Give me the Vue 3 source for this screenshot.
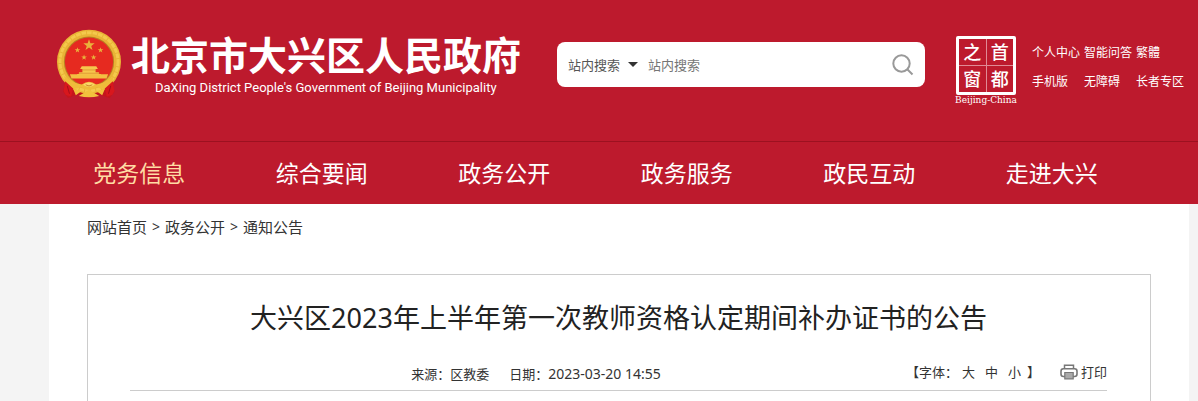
<template>
    <div class="page">
        <header class="header">
            <div class="header-top">
                <a class="logo" href="#">
                    <!-- National emblem -->
                    <svg class="emblem" viewBox="46 43 200 210" aria-hidden="true">
                        <path d="M76 190 L68 232 L82 251 L112 240 L145 250 L178 240 L208 252 L223 232 L214 190 Z" fill="#c4161c" />
                        <circle cx="146" cy="141" r="97" fill="#e9b436" />
                        <circle cx="146" cy="141" r="88" fill="none" stroke="#f4c94c" stroke-width="9" stroke-dasharray="14 3" />
                        <circle cx="146" cy="141" r="76" fill="#b98022" />
                        <circle cx="146" cy="141" r="73" fill="#e62a20" />
                        <polygon v-for="(star, i) in stars" :key="i" :points="star" fill="#e9b23c" />
                        <path d="M124 155 H168 L173 163 H119 Z M126 163 H166 V173 H126 Z M116 173 H176 V181 H116 Z M110 178 H182 V190 H110 Z" fill="#f6c64c" />
                        <path d="M88 179 H204 L199 192 H93 Z" fill="#f3bd42" />
                        <path d="M124 166 H168 M114 176 H178" stroke="#d8862a" stroke-width="2" />
                        <path d="M70 184 Q96 205 124 210 Q146 194 168 210 Q196 205 221 184 L213 215 Q188 230 171 218 Q146 234 121 218 Q102 230 79 215 Z" fill="#efbb3a" />
                        <path d="M128 211 Q146 197 164 211 Q146 223 128 211 Z" fill="#f9d96a" />
                        <path d="M136 211 Q146 218 156 211" stroke="#c98624" stroke-width="3" fill="none" />
                        <path d="M74 200 L98 222 L92 247 L75 241 L69 230 Z M218 200 L194 222 L200 247 L217 241 L223 230 Z" fill="#d8171d" />
                        <path d="M98 224 L124 230 L106 243 Z M194 224 L168 230 L186 243 Z M115 245 L146 226 L177 245 Q146 253 115 245 Z" fill="#f2c13d" />
                        <path d="M80 214 L87 238 M212 214 L205 238" stroke="#a70d18" stroke-width="3" />
                    </svg>
                    <span class="logo-text">
                        <strong class="logo-name">北京市大兴区人民政府</strong>
                        <span class="logo-en">DaXing District People's Government of Beijing Municipality</span>
                    </span>
                </a>

                <form class="search" role="search" @submit.prevent>
                    <div class="search-scope">
                        <select v-model="scope" aria-label="搜索范围">
                            <option>站内搜索</option>
                        </select>
                    </div>
                    <input v-model="keyword" type="text" placeholder="站内搜索" aria-label="站内搜索">
                    <button type="submit" aria-label="搜索">
                        <svg viewBox="0 0 22 22" width="22" height="22" fill="none" stroke="#999" stroke-width="2">
                            <circle cx="9.5" cy="9.5" r="8.2" />
                            <path d="M15.5 15.5 L20.5 20.5" />
                        </svg>
                    </button>
                </form>

                <a class="seal" href="#">
                    <span class="seal-frame">
                        <span v-for="char in sealChars" :key="char">{{ char }}</span>
                    </span>
                    <span class="seal-caption">Beijing-China</span>
                </a>

                <div class="quick-links">
                    <a v-for="link in quickLinks" :key="link" href="#">{{ link }}</a>
                </div>
            </div>

            <nav class="nav">
                <a v-for="(item, i) in navItems" :key="item" href="#" :class="{ active: i === 0 }">{{ item }}</a>
            </nav>
        </header>

        <main class="content">
            <div class="breadcrumb">
                <a href="#">网站首页</a>
                <span>&gt;</span>
                <a href="#">政务公开</a>
                <span>&gt;</span>
                <a href="#">通知公告</a>
            </div>

            <article class="article">
                <h1>大兴区2023年上半年第一次教师资格认定期间补办证书的公告</h1>
                <div class="meta">
                    <div class="source">
                        <span>来源：区教委</span>
                        <span>日期：<time datetime="2023-03-20T14:55">2023-03-20 14:55</time></span>
                    </div>
                    <div class="font-size">
                        <span class="font-size-label">【字体：</span>
                        <button v-for="size in sizes" :key="size" type="button">{{ size }}</button>
                        <span>】</span>
                    </div>
                    <button class="print" type="button">
                        <svg viewBox="0 0 18 16" width="18" height="16" aria-hidden="true">
                            <path d="M4.5 5 V1.2 H13.5 V5" fill="none" stroke="#777" stroke-width="1.5" />
                            <rect x="1" y="4.8" width="16" height="7.7" rx="2.4" fill="#fff" stroke="#777" stroke-width="1.6" />
                            <path d="M4.8 8.5 H13.2 V14.8 H4.8 Z" fill="#aaa" stroke="#777" stroke-width="1.2" />
                        </svg>
                        打印
                    </button>
                </div>
            </article>
        </main>
    </div>
</template>

<script setup>
import { ref } from "vue";

const scope = ref("站内搜索");
const keyword = ref("");

const navItems = ["党务信息", "综合要闻", "政务公开", "政务服务", "政民互动", "走进大兴"];
const quickLinks = ["个人中心", "智能问答", "繁體", "手机版", "无障碍", "长者专区"];
const sealChars = ["之", "首", "窗", "都"];
const sizes = ["大", "中", "小"];

// Points of a five-pointed star around (cx, cy)
const starPoints = (cx, cy, r) => {
    const points = [];
    for (let i = 0; i < 10; i++) {
        const radius = i % 2 === 0 ? r : r * 0.4;
        const angle = (i * 36 - 90) * Math.PI / 180;
        points.push(`${(cx + radius * Math.cos(angle)).toFixed(1)},${(cy + radius * Math.sin(angle)).toFixed(1)}`);
    }
    return points.join(" ");
};

const stars = [
    starPoints(146, 91, 18),
    starPoints(111, 106, 9),
    starPoints(181, 106, 9),
    starPoints(131, 128, 9),
    starPoints(160, 128, 9),
];
</script>

<style>
body {
    margin: 0;
}
</style>

<style scoped>
.page {
    display: flex;
    flex-direction: column;
    min-height: 100vh;
    background-color: #f4f4f4;
    color: #333;
    font-family: "Noto Sans", "Noto Sans CJK SC", sans-serif;
    font-size: 13px;
}

a {
    color: inherit;
    text-decoration: none;
}

button,
input,
select {
    margin: 0;
    padding: 0;
    border: 0;
    background: none;
    color: inherit;
    font: inherit;
}

button {
    cursor: pointer;
}

/* Header */
.header {
    background-color: #bd1a2d;
    color: #fff;
}

.header-top {
    display: flex;
    align-items: flex-start;
    box-sizing: border-box;
    height: 141px;
    padding: 29px 10px 0 56px;
}

.logo {
    display: flex;
    flex: none;
    gap: 9px;
}

.emblem {
    width: 66px;
    height: 70px;
}

.logo-text {
    display: flex;
    flex-direction: column;
    padding-top: 4px;
}

.logo-name {
    font-size: 39px;
    font-weight: 700;
    line-height: 44px;
}

.logo-en {
    padding-left: 24px;
    font-family: Roboto, sans-serif;
    font-size: 13px;
    line-height: 22px;
}

.search {
    display: flex;
    flex: 1;
    align-items: center;
    box-sizing: border-box;
    height: 45px;
    margin: 13px 28px 0 36px;
    padding: 0 11px;
    border-radius: 8px;
    background-color: #fff;
    color: #555;
}

.search-scope {
    position: relative;
    margin-right: 10px;
}

.search-scope select {
    display: block;
    width: 70px;
    appearance: none;
}

.search-scope::after {
    content: "";
    position: absolute;
    top: 50%;
    right: 0;
    margin-top: -3px;
    border: 5px solid transparent;
    border-top-color: #333;
    border-bottom: 0;
    pointer-events: none;
}

.search input {
    flex: 1;
    min-width: 0;
    outline: none;
}

.search input::placeholder {
    color: #757575;
    opacity: 1;
}

.search button {
    height: 22px;
}

.search svg {
    display: block;
}

.seal {
    display: flex;
    flex: none;
    flex-direction: column;
    align-items: center;
    width: 66px;
    padding-top: 7px;
}

.seal-frame {
    display: grid;
    grid-template-columns: 1fr 1fr;
    gap: 1px;
    box-sizing: border-box;
    width: 60px;
    height: 59px;
    border: 3px solid #fff;
    border-radius: 2px;
    background-color: #e08a95;
}

.seal-frame span {
    background-color: #bd1a2d;
    font-size: 18px;
    font-weight: 500;
    line-height: 26px;
    text-align: center;
}

.seal-caption {
    font-family: "DejaVu Serif", serif;
    font-size: 9px;
    line-height: 11px;
}

.quick-links {
    display: grid;
    flex: none;
    grid-template-columns: repeat(3, 52px);
    margin: 9px 0 0 13px;
    font-size: 12px;
    line-height: 29px;
    white-space: nowrap;
}

/* Navigation */
.nav {
    display: grid;
    grid-template-columns: repeat(6, 1fr);
    padding: 0 55px 0 48px;
    border-top: 1px solid #9c1120;
    font-size: 23px;
    line-height: 62px;
    text-align: center;
}

.nav .active {
    color: #ffdca4;
}

/* Content */
.content {
    display: flex;
    flex: 1;
    flex-direction: column;
    margin: 0 9px 0 49px;
    padding: 0 38px;
    background-color: #fff;
}

.breadcrumb {
    display: flex;
    gap: 5px;
    margin-bottom: 24px;
    font-size: 15px;
    line-height: 46px;
}

.breadcrumb span {
    font-size: 14px;
}

.article {
    flex: 1;
    padding: 21px 43px 0 42px;
    border: 1px solid #ccc;
    border-bottom: 0;
}

.article h1 {
    margin: 0;
    color: #222;
    font-size: 27px;
    font-weight: 400;
    line-height: 44px;
    text-align: center;
}

.meta {
    display: flex;
    align-items: flex-start;
    margin-top: 18px;
    border-bottom: 1px solid #ccc;
    line-height: 28px;
}

.source {
    display: flex;
    flex: 1;
    gap: 20px;
    justify-content: center;
    padding-left: 36px;
    line-height: 32px;
}

.source time {
    font-size: 14px;
}

.font-size {
    display: flex;
}

.font-size-label {
    margin-right: 4px;
}

.font-size button {
    margin-right: 10px;
}

.font-size button:last-of-type {
    margin-right: 6px;
}

.print {
    display: flex;
    gap: 3px;
    align-items: center;
    margin-left: 20px;
}
</style>
